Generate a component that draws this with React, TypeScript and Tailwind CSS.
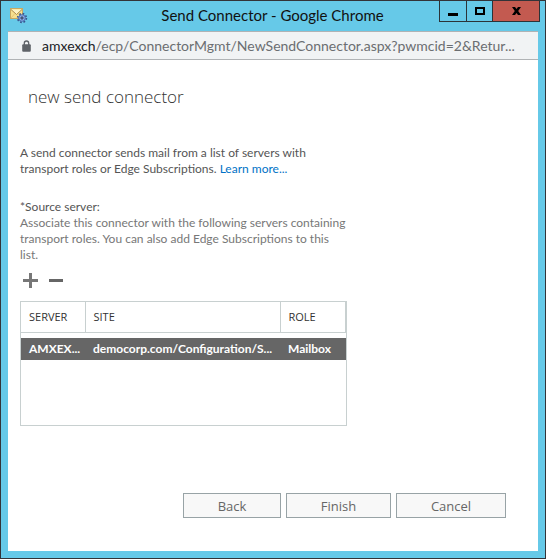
import React from 'react';

interface Server {
    name: string;
    site: string;
    role: string;
}

const SERVERS: Server[] = [
    {
        name: 'AMXEX...',
        site: 'democorp.com/Configuration/S...',
        role: 'Mailbox',
    },
];

const MailGearIcon = () => (
    <svg width="18" height="17" viewBox="0 0 18 17" aria-hidden="true">
        <rect x="0.5" y="0.5" width="12" height="10" fill="#f8e08e" stroke="#c9a860" />
        <path d="M1 1.5 6.5 6.5 12 1.5" fill="#fff3c4" stroke="#b08c4c" />
        <path d="M1 10 4.5 6M12 10 8.5 6" stroke="#e3c67a" fill="none" />
        <circle
            cx="12"
            cy="10"
            r="4.3"
            fill="none"
            stroke="#3a558f"
            strokeWidth="1.8"
            strokeDasharray="1.7 1.677"
        />
        <circle cx="12" cy="10" r="3.3" fill="#8fb0e8" stroke="#4a6cb0" />
        <circle cx="12" cy="10" r="1.2" fill="#75633f" stroke="#35508a" />
    </svg>
);

const LockIcon = () => (
    <svg width="9" height="12" viewBox="0 0 9 12" aria-hidden="true">
        <path d="M2.3 5V3.2a2.2 2.2 0 0 1 4.4 0V5" fill="none" stroke="#5f6368" strokeWidth="1.3" />
        <rect x="0.2" y="4.2" width="8.6" height="7.5" rx="1" fill="#5f6368" />
    </svg>
);

const TitleBar = () => (
    <header className="flex h-[30px] items-start justify-between pl-[9px] pr-[5px]">
        <div className="w-24 pt-[7px]">
            <MailGearIcon />
        </div>
        <h1 className="whitespace-nowrap pt-[2px] text-[15px] leading-[24px] text-[#111]">
            Send Connector - Google Chrome
        </h1>
        <div className="flex h-[21px] border-x border-b border-[#2b3338]">
            <button
                type="button"
                aria-label="Minimize"
                className="flex w-[27px] items-center justify-center border-r border-[#2b3338]"
            >
                <svg width="10" height="9" viewBox="0 0 10 9">
                    <path d="M0 6h10v3H0z" />
                </svg>
            </button>
            <button
                type="button"
                aria-label="Maximize"
                className="flex w-[26px] items-center justify-center border-r border-[#2b3338]"
            >
                <svg width="10" height="8" viewBox="0 0 10 8">
                    <path d="M0 0h10v8H0zM2 2v4h6V2z" fillRule="evenodd" />
                </svg>
            </button>
            <button
                type="button"
                aria-label="Close"
                className="flex w-[46px] items-center justify-center bg-[#c35a50]"
            >
                <svg width="9" height="8" viewBox="0 0 9 8">
                    <path d="M0 0h3l1.5 2L6 0h3L6.2 4 9 8H6L4.5 6 3 8H0l2.8-4z" />
                </svg>
            </button>
        </div>
    </header>
);

const AddressBar = () => (
    <div className="flex h-[29px] items-center gap-[11px] border-y border-[#b0b3b5] bg-[#f1f3f4] pl-[14px] pr-4">
        <LockIcon />
        <p className="whitespace-nowrap text-[14px] text-[#6b6e71]">
            <span className="text-[#202124]">amxexch</span>
            /ecp/ConnectorMgmt/NewSendConnector.aspx?pwmcid=2&amp;Retur...
        </p>
    </div>
);

const ServerTable = () => (
    <div className="h-[125px] border border-[#c8d0d0]">
        <table className="w-full table-fixed border-collapse text-left text-[12px]">
            <thead>
                <tr className="h-[30px] border-b border-[#c8d0d0] font-['Open_Sans','Noto_Sans',sans-serif] text-[11px] text-[#333]">
                    <th className="w-[64px] border-r border-[#c8d0d0] px-2 font-normal">SERVER</th>
                    <th className="w-[195px] border-r border-[#c8d0d0] px-2 font-normal">SITE</th>
                    <th className="border-r border-[#c8d0d0] px-2 font-normal">ROLE</th>
                </tr>
            </thead>
            <tbody>
                <tr className="h-[6px]" aria-hidden="true" />
                {SERVERS.map((server) => (
                    <tr key={server.name} className="h-[22px] bg-[#666] font-bold text-white">
                        <td className="whitespace-nowrap pl-2">{server.name}</td>
                        <td className="whitespace-nowrap pl-2">{server.site}</td>
                        <td className="whitespace-nowrap pl-2">{server.role}</td>
                    </tr>
                ))}
            </tbody>
        </table>
    </div>
);

const App = () => {
    return (
        <div className="flex min-h-screen flex-col border border-[#333338] bg-[#66c9e8] font-['Lato','Open_Sans',sans-serif]">
            <TitleBar />
            <div className="mx-[7px] mb-[7px] flex flex-1 flex-col bg-white">
                <AddressBar />
                <main className="flex flex-1 flex-col px-3 text-[12px] leading-[16px] text-[#555]">
                    <h2 className="mt-[23px] pl-2 font-['Open_Sans','Noto_Sans',sans-serif] text-[17px] font-light leading-[28px] text-[#333]">
                        new send connector
                    </h2>
                    <div className="mt-[34px] max-w-[327px]">
                        <p className="whitespace-nowrap">
                            A send connector sends mail from a list of servers with
                            <br />
                            transport roles or Edge Subscriptions.{' '}
                            <a href="#learn-more" className="text-[#0072c6]">
                                Learn more...
                            </a>
                        </p>
                        <h3 className="mt-[22px]">*Source server:</h3>
                        <p className="whitespace-nowrap text-[#777]">
                            Associate this connector with the following servers containing
                            <br />
                            transport roles. You can also add Edge Subscriptions to this
                            <br />
                            list.
                        </p>
                        <div className="mb-[13px] mt-[10px] flex gap-[11px] pl-[3px]">
                            <button type="button" aria-label="Add">
                                <svg width="15" height="15" viewBox="0 0 15 15" fill="#777">
                                    <path d="M6 0h3v6h6v3H9v6H6V9H0V6h6z" />
                                </svg>
                            </button>
                            <button type="button" aria-label="Remove">
                                <svg width="14" height="15" viewBox="0 0 14 15" fill="#666">
                                    <path d="M0 6h14v3H0z" />
                                </svg>
                            </button>
                        </div>
                        <ServerTable />
                    </div>
                    <div className="mb-[33px] mr-5 mt-auto flex h-[25px] justify-end gap-[5px] font-['Open_Sans','Noto_Sans',sans-serif] text-[13px] text-[#666]">
                        <button type="button" className="w-[98px] border border-[#98a3a6] bg-[#f8f8f8]">
                            Back
                        </button>
                        <button type="button" className="w-[105px] border border-[#98a3a6] bg-[#f8f8f8]">
                            Finish
                        </button>
                        <button type="button" className="w-[110px] border border-[#98a3a6] bg-[#f8f8f8]">
                            Cancel
                        </button>
                    </div>
                </main>
            </div>
        </div>
    );
};

export default App;
